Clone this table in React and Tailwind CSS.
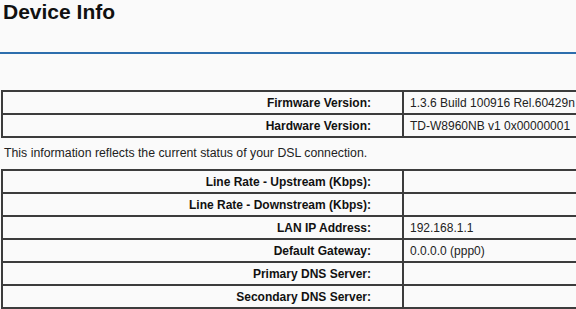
const firmware = [
  ['Firmware Version:', '1.3.6 Build 100916 Rel.60429n'],
  ['Hardware Version:', 'TD-W8960NB v1 0x00000001'],
]

const connection = [
  ['Line Rate - Upstream (Kbps):', ''],
  ['Line Rate - Downstream (Kbps):', ''],
  ['LAN IP Address:', '192.168.1.1'],
  ['Default Gateway:', '0.0.0.0 (ppp0)'],
  ['Primary DNS Server:', ''],
  ['Secondary DNS Server:', ''],
]

function InfoTable({ rows }) {
  return (
    <table className="ml-px w-[620px] border-collapse border-2 border-[#3c3c3c] text-[12px] leading-[14px]">
      <tbody>
        {rows.map(([label, value]) => (
          <tr key={label} className="h-[23px]">
            <td className="w-[401px] border-2 border-[#3c3c3c] pr-[31px] text-right font-bold text-[#111] whitespace-nowrap">
              {label}
            </td>
            <td className="border-2 border-[#3c3c3c] pl-[6px] text-[#222] whitespace-nowrap">{value}</td>
          </tr>
        ))}
      </tbody>
    </table>
  )
}

export default function App() {
  return (
    <div className="h-[309px] w-[576px] overflow-hidden bg-[#fafafa] font-['Liberation_Sans',Arial,sans-serif]">
      <h1 className="pl-[3px] pt-px text-[21px] font-bold leading-[22px] text-[#111]">Device Info</h1>
      <div className="mt-[29px] h-[2px] w-full bg-[#2d6ead]" />
      <div className="mt-[36px]">
        <InfoTable rows={firmware} />
      </div>
      <p className="mt-[8px] pl-[4px] text-[12.3px] leading-[14px] text-[#222]">
        This information reflects the current status of your DSL connection.
      </p>
      <div className="mt-[9px]">
        <InfoTable rows={connection} />
      </div>
    </div>
  )
}
